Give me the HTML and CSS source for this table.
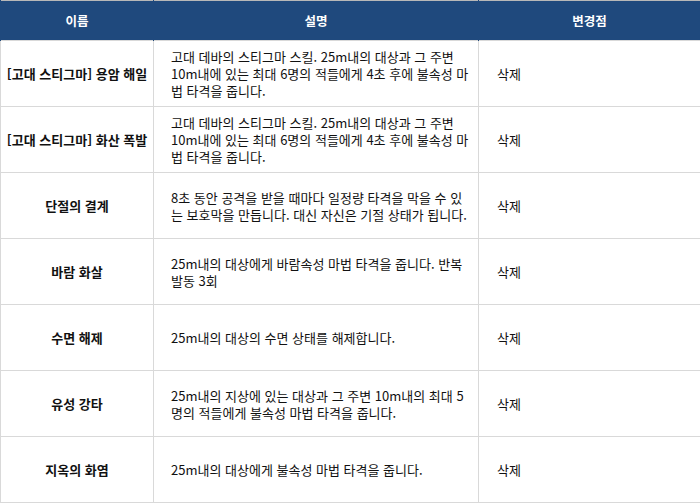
FILE: index.html
```html
<!DOCTYPE html>
<html lang="ko">
<head>
<meta charset="utf-8">
<link rel="stylesheet" href="styles.css">
</head>
<body>
<table class="tbl">
  <colgroup>
    <col class="c1"><col class="c2"><col class="c3">
  </colgroup>
  <thead>
    <tr><th>이름</th><th>설명</th><th>변경점</th></tr>
  </thead>
  <tbody>
    <tr><td class="name">[고대 스티그마] 용암 해일</td><td class="desc">고대 데바의 스티그마 스킬. 25m내의 대상과 그 주변 10m내에 있는 최대 6명의 적들에게 4초 후에 불속성 마법 타격을 줍니다.</td><td class="chg">삭제</td></tr>
    <tr><td class="name">[고대 스티그마] 화산 폭발</td><td class="desc">고대 데바의 스티그마 스킬. 25m내의 대상과 그 주변 10m내에 있는 최대 6명의 적들에게 4초 후에 불속성 마법 타격을 줍니다.</td><td class="chg">삭제</td></tr>
    <tr><td class="name">단절의 결계</td><td class="desc">8초 동안 공격을 받을 때마다 일정량 타격을 막을 수 있는 보호막을 만듭니다. 대신 자신은 기절 상태가 됩니다.</td><td class="chg">삭제</td></tr>
    <tr><td class="name">바람 화살</td><td class="desc">25m내의 대상에게 바람속성 마법 타격을 줍니다. 반복 발동 3회</td><td class="chg">삭제</td></tr>
    <tr><td class="name">수면 해제</td><td class="desc">25m내의 대상의 수면 상태를 해제합니다.</td><td class="chg">삭제</td></tr>
    <tr><td class="name">유성 강타</td><td class="desc">25m내의 지상에 있는 대상과 그 주변 10m내의 최대 5명의 적들에게 불속성 마법 타격을 줍니다.</td><td class="chg">삭제</td></tr>
    <tr><td class="name">지옥의 화염</td><td class="desc">25m내의 대상에게 불속성 마법 타격을 줍니다.</td><td class="chg">삭제</td></tr>
  </tbody>
</table>
</body>
</html>
```
FILE: styles.css
```css
html, body {
  margin: 0;
  padding: 0;
  background: #fff;
}
body {
  font-family: "Noto Sans CJK KR", "Noto Sans", sans-serif;
  font-size: 13px;
  color: #111;
}
.tbl {
  width: 700px;
  border-collapse: collapse;
  table-layout: fixed;
  border: 1px solid #b8b8b8;
}
.c1 { width: 153px; }
.c2 { width: 325px; }
.c3 { width: 222px; }
.tbl th {
  background: #1f497d;
  color: #fff;
  font-weight: bold;
  font-size: 12.5px;
  height: 39px;
  padding: 0;
  text-align: center;
  line-height: 17px;
  border-left: 1px solid #1f497d;
}
.tbl td {
  height: 65px;
  padding: 0 17px;
  border: 1px solid #d9d9d9;
  line-height: 17px;
  vertical-align: middle;
}
.tbl td.name {
  text-align: center;
  font-weight: bold;
  padding: 0 2px;
}
.tbl td.desc {
  padding: 0 8px 0 17px;
}
.tbl td.chg {
  padding-left: 18px;
}
```
